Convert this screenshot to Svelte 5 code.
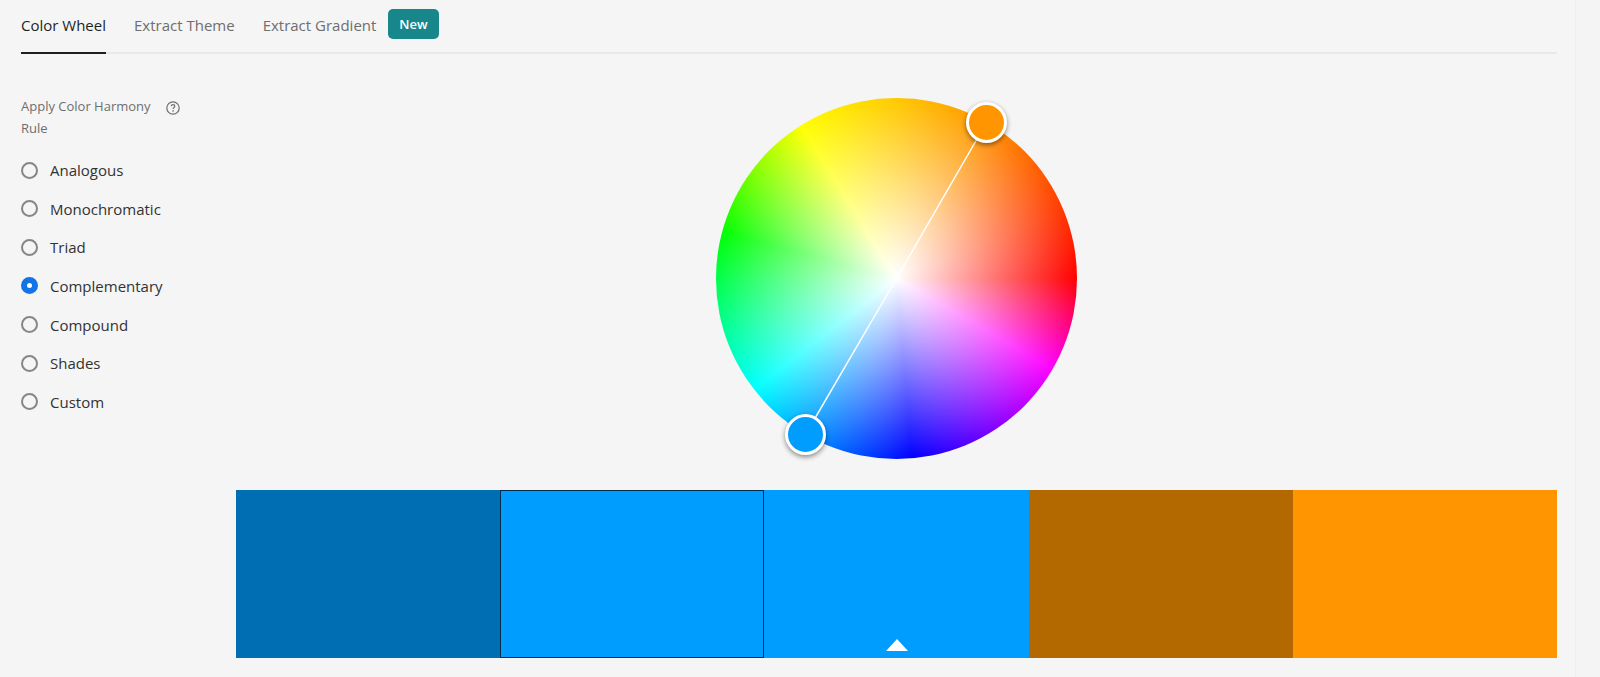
<script>
  const tabs = [
    { name: 'Color Wheel' },
    { name: 'Extract Theme' },
    { name: 'Extract Gradient' }
  ];
  const rules = ['Analogous', 'Monochromatic', 'Triad', 'Complementary', 'Compound', 'Shades', 'Custom'];
  const swatches = ['#006eb3', '#009dff', '#009dff', '#b36800', '#ff9500'];

  let activeTab = $state('Color Wheel');
  let rule = $state('Complementary');
  let selected = $state(1);
  const base = 2;
</script>

<div class="page">
  <nav class="tabs" aria-label="Color tools">
    {#each tabs as tab}
      <button class="tab" class:active={activeTab === tab.name} onclick={() => (activeTab = tab.name)}>{tab.name}</button>
    {/each}
    <span class="badge">New</span>
  </nav>

  <div class="content">
    <fieldset class="rules">
      <legend class="heading">
        <span>Apply Color Harmony Rule</span>
        <svg class="help" viewBox="0 0 14 14" fill="none" stroke="#6e6e6e" aria-hidden="true">
          <circle cx="7" cy="7" r="6.2" stroke-width="1.2" />
          <path d="M5.2 5.3C5.3 4.2 6 3.7 7 3.7S8.8 4.3 8.8 5.3C8.8 6.5 7.1 6.6 7.1 8.1" stroke-width="1.2" />
          <circle cx="7.1" cy="9.9" r=".8" fill="#6e6e6e" stroke="none" />
        </svg>
      </legend>
      <div class="options">
        {#each rules as name}
          <label class="option">
            <input type="radio" name="rule" value={name} bind:group={rule} />
            <span>{name}</span>
          </label>
        {/each}
      </div>
    </fieldset>

    <main class="stage">
      <div class="wheel">
        <svg class="spokes" viewBox="0 0 361 361" aria-hidden="true">
          <path d="M270.5 24.5 180.5 180.5 89.5 336.5" fill="none" stroke="#fff" stroke-width="1.5" />
        </svg>
        <button class="handle warm" aria-label="#FF9500"></button>
        <button class="handle cool" aria-label="#009DFF"></button>
      </div>
      <div class="swatches">
        {#each swatches as color, i}
          <button
            class="swatch"
            class:selected={selected === i}
            style:background={color}
            aria-label={color}
            onclick={() => (selected = i)}
          >
            {#if i === base}
              <svg class="marker" viewBox="0 0 22 12" aria-hidden="true"><path d="M11 0 22 12H0Z" fill="#fff" /></svg>
            {/if}
          </button>
        {/each}
      </div>
    </main>
  </div>
</div>

<style>
  :global(body) {
    background: #f4f4f4;
  }

  .page {
    box-sizing: border-box;
    min-height: 100vh;
    margin-right: 24px;
    padding: 0 18px 16px 21px;
    border-right: 1px solid #f0f0f0;
    background: #f5f5f5;
    color: #323232;
    font-family: 'Open Sans', 'Noto Sans', sans-serif;
    font-size: 15px;
  }

  button {
    margin: 0;
    padding: 0;
    border: 0;
    background: none;
    font: inherit;
    cursor: pointer;
  }

  .tabs {
    display: flex;
    align-items: stretch;
    height: 54px;
    box-shadow: inset 0 -2px #e9e9e9;
  }

  .tab {
    margin-right: 28px;
    padding-bottom: 3px;
    border-bottom: 2px solid transparent;
    color: #6e6e6e;
    white-space: nowrap;
  }

  .tab.active {
    border-color: #1f1f1f;
    color: #1f1f1f;
  }

  .badge {
    align-self: flex-start;
    margin: 9px 0 0 -16px;
    padding: 0 11px;
    border-radius: 5px;
    background: #17878c;
    color: #fff;
    font-size: 13px;
    font-weight: 600;
    line-height: 30px;
  }

  .content {
    display: flex;
  }

  .rules {
    flex: none;
    box-sizing: border-box;
    width: 215px;
    min-width: 0;
    margin: 0;
    padding: 0;
    border: 0;
  }

  .heading {
    display: flex;
    align-items: flex-start;
    gap: 10px;
    padding: 41px 0 0;
    color: #6e6e6e;
    font-size: 13px;
    line-height: 22px;
  }

  .heading span {
    width: 135px;
  }

  .help {
    width: 14px;
    height: 14px;
    margin-top: 6px;
  }

  .options {
    display: grid;
    grid-auto-rows: 1fr;
    height: 270px;
    margin-top: 12px;
  }

  .option {
    display: flex;
    align-items: center;
    gap: 12px;
    cursor: pointer;
  }

  input {
    appearance: none;
    box-sizing: border-box;
    width: 17px;
    height: 17px;
    margin: 0;
    border: 2px solid #868686;
    border-radius: 50%;
  }

  input:checked {
    border: 6px solid #1473e6;
    background: #fff;
  }

  .stage {
    flex: 1;
    min-width: 0;
    padding-top: 44px;
  }

  .wheel {
    position: relative;
    width: 361px;
    height: 361px;
    margin: 0 auto 31px;
    border-radius: 50%;
    background:
      radial-gradient(circle closest-side, #fff, rgb(255 255 255 / 0)),
      conic-gradient(from 90deg, #f00, #f0f 30deg, #00f 85deg, #0ff 142deg, #0f0 195deg, #ff0 238deg, #ff9500 300deg, #f00);
  }

  .spokes {
    display: block;
    width: 100%;
  }

  .handle {
    position: absolute;
    box-sizing: border-box;
    width: 41px;
    height: 41px;
    border: 3px solid #fff;
    border-radius: 50%;
    box-shadow: 0 2px 5px rgb(0 0 0 / 0.45);
  }

  .warm {
    left: 250px;
    top: 4px;
    background: #ff9500;
  }

  .cool {
    left: 69px;
    top: 316px;
    background: #009dff;
  }

  .swatches {
    display: flex;
    height: 168px;
  }

  .swatch {
    display: flex;
    flex: 1;
    align-items: flex-end;
    justify-content: center;
  }

  .swatch.selected {
    outline: 1px solid #002b4d;
    outline-offset: -1px;
  }

  .marker {
    width: 22px;
    height: 12px;
    margin-bottom: 7px;
  }
</style>
